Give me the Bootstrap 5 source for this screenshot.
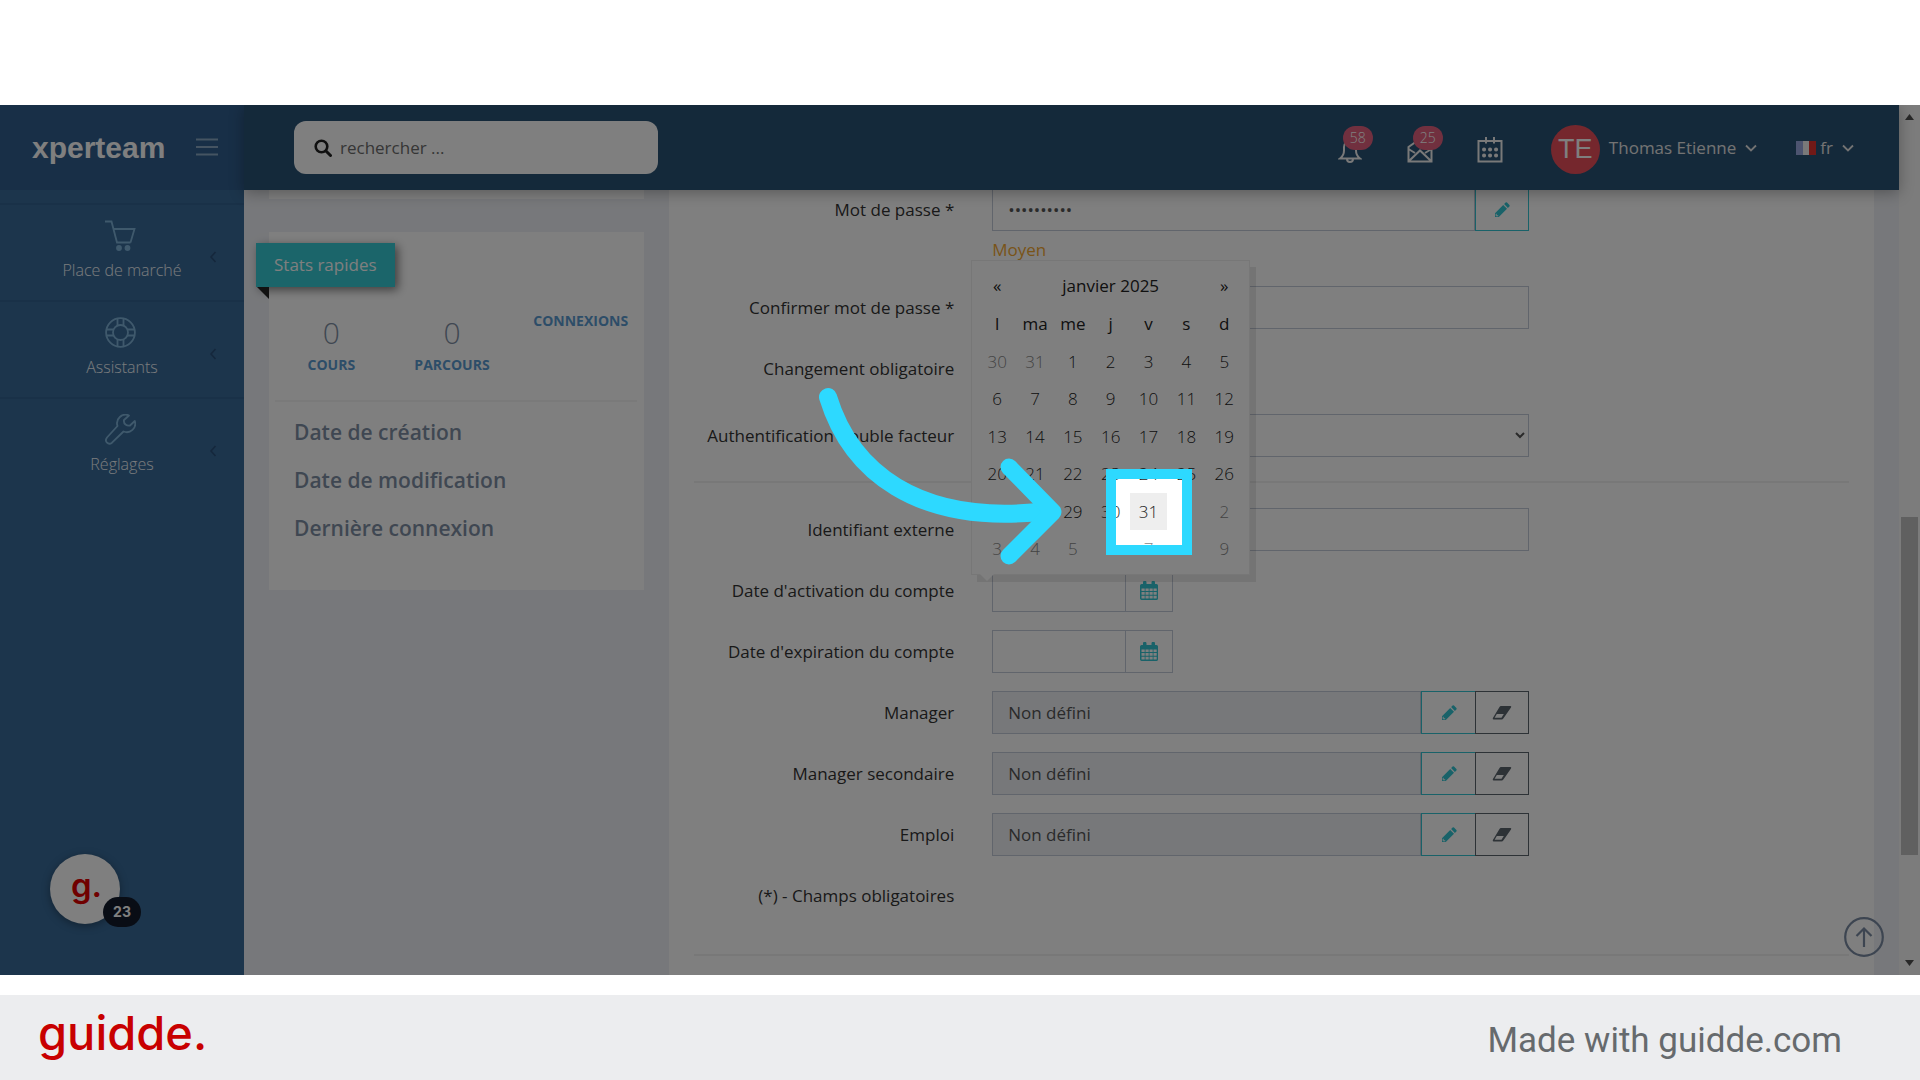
<!DOCTYPE html>
<html lang="fr">
<head>
<meta charset="utf-8">
<meta name="viewport" content="width=device-width, initial-scale=1">
<title>Xperteam – Utilisateur</title>
<link href="https://cdn.jsdelivr.net/npm/bootstrap@5.3.0/dist/css/bootstrap.min.css" rel="stylesheet">
<style>
  body { font-family: "Open Sans", sans-serif; font-size: 17px; color: #333; background: #fff; min-height: 100vh; }
  svg { display: block; flex: none; }
  .stage { margin-top: 105px; background: #eff1f6; }
  .scroll-track { width: 21px; background: #f8f8f8; padding: 9px 2px; }
  .scroll-before { flex: 397 0 0; }
  .scroll-thumb { flex: 339 0 0; background: #c1c1c1; width: 17px; }
  .scroll-after { flex: 105 0 0; }

  .side-nav { width: 244px; background: #386a98; }
  .side-head { height: 85px; background: #305e8e; padding: 0 26px 0 32px; }
  .brand { font-family: "Liberation Sans", sans-serif; font-size: 30px; font-weight: 700; color: #fff; text-decoration: none; line-height: 36px; }
  .side-gap { height: 13px; }
  .side-link { height: 97px; border-top: 2px solid #336290; color: #f2f6fa; font-weight: 300; font-size: 16px; line-height: 22px; text-decoration: none; padding: 15px 20px 0; gap: 8px; }
  .side-link svg { color: #7fb3d9; }
  .side-icon { margin-right: 3px; }
  .side-arrow { right: 27px; top: 46px; }

  .top-nav { height: 85px; background: #285274; box-shadow: 0 3px 14px rgba(0,0,0,.3); padding: 0 45px 0 50px; color: #fff; }
  .search-box { width: 364px; height: 53px; background: #fff; border-radius: 12px; padding: 0 20px; gap: 6px; }
  .search-box input { border: 0; outline: 0; background: transparent; font-size: 17px; color: #666; }
  .search-box input::placeholder { color: #6c6c6c; opacity: 1; }
  .nav-btns { gap: 40px; margin-right: 46px; }
  .nav-btn { border: 0; background: none; padding: 4px 0 0; color: #f2f2f2; width: 30px; height: 34px; display: flex; align-items: center; justify-content: center; position: relative; }
  .count-pill { position: absolute; left: 8px; top: -5px; width: 30px; height: 24px; border-radius: 12px; background: #e3607f; color: #fff; font-size: 14px; line-height: 23px; text-align: center; font-weight: 300; }
  .avatar { width: 49px; height: 49px; border-radius: 50%; background: #ea4f5b; color: #fff; font: 27px/49px "Liberation Sans", sans-serif; text-align: center; margin-top: 4px; }
  .user-menus { gap: 39px; }
  .user-menu { gap: 9px; border: 0; background: none; color: #e6e6e6; padding: 0; }

  .left-col { width: 425px; padding: 0 25px; }
  .tail-panel { height: 9px; background: #fff; }
  .stats-panel { background: #fff; margin-top: 33px; padding: 79px 7px 28px 6px; position: relative; }
  .ribbon { position: absolute; left: -13px; top: 11px; height: 44px; padding: 0 18px; line-height: 43px; background: #36cad4; color: #fff; box-shadow: 3px 3px 9px rgba(0,0,0,.5); }
  .ribbon-fold { position: absolute; left: -12px; top: 55px; border-top: 12px solid #222; border-left: 12px solid transparent; }
  .stat-num { font-size: 30px; line-height: 44px; font-weight: 300; color: #7f8fa4; }
  .stat-cap { font-size: 14px; line-height: 20px; font-weight: 700; color: #5b9bd1; }
  .stats-row { height: 91px; border-bottom: 2px solid #f4f4f4; margin-bottom: 16px; }
  .fact { font-size: 21px; line-height: 28px; font-weight: 600; color: #7f8fa4; padding-left: 19px; margin-bottom: 20px; }

  .form-panel { background: #fff; padding: 0 25px; margin-right: 25px; }
  .f-row { --bs-gutter-x: 38px; margin-bottom: 18px; }
  .f-row label, .f-row .f-label { line-height: 43px; text-align: right; white-space: nowrap; }
  .f-ctl { width: 48.2%; }
  .first-row { margin-top: -2px; }
  .hint { color: #f3a832; line-height: 37px; }
  .tall-row { height: 49px; }
  .box { height: 43px; border: 1px solid #c2cad8; border-radius: 0; font-size: 17px; padding: 0 15px; background-color: #fff; color: #555; }
  .box[readonly] { background-color: #eef1f5; }
  .sq-btn { width: 54px; height: 43px; border: 1px solid #32c5d2; color: #32c5d2; background: #fff; border-radius: 0; padding: 0; display: flex; align-items: center; justify-content: center; flex: none; }
  .sq-dark { border-color: #5a646d; color: #5a646d; }
  .sq-date { border-color: #c2cad8; width: 48px; }
  .date-group { width: 181px; }
  select.box { appearance: auto; padding: 0; width: 100%; }
  .rule { height: 2px; background: #f0f0f0; margin: 24px 0 25px; }
  .last-rule { margin: 31px 0 0; }
  .dp-anchor { position: relative; }

  .dp { position: absolute; left: -21px; bottom: 37px; width: 279px; background: #fff; border: 1px solid #efefef; box-shadow: 6px 7px 0 rgba(102,102,102,.15); z-index: 3; padding: 6px; color: #222; }
  .dp::after { content: ""; position: absolute; left: 8px; bottom: -7px; border-left: 7px solid transparent; border-right: 7px solid transparent; border-top: 7px solid #fff; }
  .dp table { width: 265px; table-layout: fixed; border-collapse: collapse; }
  .dp th, .dp td { text-align: center; padding: 0; font-weight: 400; line-height: 22px; height: 37px; }
  .dp th, .dp tbody tr:nth-child(even) td { height: 38px; }
  .dp td { font-weight: 300; }
  .dp .off { color: #888; }
  .dp .hov { background: #eee; }
  .spot { position: absolute; left: 134px; top: 208px; width: 86px; height: 86px; border: 10px solid #2dd9ff; box-shadow: 0 0 0 3000px rgba(0,0,0,.5); pointer-events: none; z-index: 1; }
  .pointer { position: absolute; left: -162px; top: 120px; pointer-events: none; z-index: 2; }

  .to-top { position: absolute; right: 36px; bottom: 18px; color: #7a8ba3; z-index: 1; }
  .g-bubble { position: absolute; left: 50px; bottom: 51px; width: 70px; height: 70px; border-radius: 50%; background: #fff; box-shadow: 0 2px 8px rgba(0,0,0,.35); color: #e00000; font: 600 33px/60px "Inter", sans-serif; text-align: center; border: 0; padding: 0 0 8px 3px; }
  .g-count { position: absolute; left: 53px; top: 43px; width: 38px; height: 30px; border-radius: 15px; background: #121a2b; color: #fff; font: 700 14px/30px "Inter", sans-serif; }
  .foot { margin-top: 20px; height: 85px; background: #ecedef; padding: 0 78px 0 38px; font-family: "Roboto", sans-serif; font-size: 35px; color: #666a6d; }
  .foot-logo { font-family: "Inter", sans-serif; font-size: 47px; line-height: 60px; font-weight: 500; color: #c80000; text-decoration: none; padding-bottom: 10px; }
  .foot-note { padding-top: 8px; }
</style>
</head>
<body class="d-flex flex-column">

<svg width="0" height="0" class="position-absolute" aria-hidden="true">
  <symbol id="pencil" viewBox="0 0 16 16"><path fill="currentColor" d="M1 11.2 9.2 3l3.8 3.8L4.8 15H1zM10.100 2.100 11.600.6q.7-.6 1.400 0l2.400 2.400q.6.7 0 1.400L13.900 5.900z"/><path d="M2.200 11.800v2h2" stroke="#fff" fill="none"/></symbol>
  <symbol id="eraser" viewBox="0 0 20 16"><path fill="currentColor" d="M9 1h9.500q1.300.3.500 1.600L11.500 13.200q-.9 1.300-1.800 1.300H1.500Q.2 14.200.9 13L7.500 2Q8 1 9 1z"/><path fill="#fff" d="M4.800 9h7L9.500 12.700H2.600z"/></symbol>
  <symbol id="cal" viewBox="0 0 18 19"><path fill="currentColor" d="M1.500 3H3V1.500a1.500 1.500 0 0 1 3.500 0V3h5V1.500a1.500 1.500 0 0 1 3.500 0V3h1.500q1.500.2 1.500 1.500V17.500q-.2 1.500-1.500 1.500h-15Q.2 18.800 0 17.500V4.500Q.2 3.200 1.500 3z"/><path stroke="#fff" stroke-width="2.600" stroke-dasharray="3.200 .8" d="M1.500 8.700h15.200M1.500 12.400h15.200M1.500 16.100h15.200"/></symbol>
  <symbol id="down" viewBox="0 0 12 8"><path d="M1 1.500 6 6.500 11 1.500" fill="none" stroke="currentColor" stroke-width="1.800"/></symbol>
  <symbol id="left" viewBox="0 0 8 12"><path d="M6.500 1 2 6l4.500 5" fill="none" stroke="#2a4f78" stroke-width="1.600"/></symbol>
</svg>

<main class="stage d-flex flex-grow-1 overflow-hidden position-relative">
  <aside class="side-nav position-relative flex-shrink-0">
    <div class="side-head d-flex align-items-center justify-content-between">
      <a href="#" class="brand">xperteam</a>
      <button class="border-0 bg-transparent p-0" aria-label="Menu">
        <svg width="22" height="22" viewBox="0 0 22 22"><path d="M0 2.500h22M0 10h22M0 17.500h22" stroke="#8aa9c4" stroke-width="1.800"/></svg>
      </button>
    </div>
    <nav>
      <div class="side-gap"></div>
      <a href="#" class="side-link d-flex flex-column align-items-center position-relative">
        <svg class="side-icon" width="31" height="31" viewBox="0 0 31 31" fill="none" stroke="currentColor" stroke-width="1.800"><path d="M0 1.500h6.500L12 22.500h13.500M8.500 9h21L25.500 22.500"/><circle cx="14" cy="28" r="2" fill="currentColor"/><circle cx="22.500" cy="28" r="2" fill="currentColor"/></svg>
        Place de marché
        <svg class="side-arrow position-absolute" width="8" height="12"><use href="#left"/></svg>
      </a>
      <a href="#" class="side-link d-flex flex-column align-items-center position-relative">
        <svg class="side-icon" width="31" height="31" viewBox="0 0 31 31" fill="none" stroke="currentColor" stroke-width="1.800"><circle cx="15.500" cy="15.500" r="14.400"/><circle cx="15.500" cy="15.500" r="7.500"/><path d="M12.500 1.500v7M18.500 1.500v7M12.500 22.500v7M18.500 22.500v7M1.500 12.500h7M1.500 18.500h7M22.500 12.500h7M22.500 18.500h7"/></svg>
        Assistants
        <svg class="side-arrow position-absolute" width="8" height="12"><use href="#left"/></svg>
      </a>
      <a href="#" class="side-link d-flex flex-column align-items-center position-relative">
        <svg class="side-icon" width="31" height="31" viewBox="0 0 31 31" fill="none" stroke="currentColor" stroke-width="1.800" stroke-linejoin="round"><path d="M24 1.500A8.500 8.500 0 0 0 12.500 12L2 23.500q-2.200 3 0 5.200t5 0L18.500 17.500A8.500 8.500 0 0 0 29.800 7L25 11.500q-2.500.5-4.500-1T19 6z"/></svg>
        Réglages
        <svg class="side-arrow position-absolute" width="8" height="12"><use href="#left"/></svg>
      </a>
    </nav>
    <button class="g-bubble" aria-label="guidde">g.<span class="g-count">23</span></button>
  </aside>

  <div class="flex-grow-1 d-flex flex-column">
    <header class="top-nav d-flex align-items-center position-relative z-2">
      <div class="search-box d-flex align-items-center me-auto">
        <svg width="18" height="18" viewBox="0 0 18 18"><circle cx="7.500" cy="7.500" r="5.800" fill="none" stroke="#222" stroke-width="2.600"/><path d="m12 12 4.500 4.500" stroke="#222" stroke-width="3" stroke-linecap="round"/></svg>
        <input type="text" class="flex-grow-1" placeholder="rechercher ..." aria-label="rechercher">
      </div>
      <div class="nav-btns d-flex align-items-center">
        <button class="nav-btn" aria-label="Notifications">
          <svg width="24" height="26" viewBox="0 0 24 26" fill="none" stroke="currentColor" stroke-width="2"><path d="M2 21.500h20q-4-3-4-8V10a6 6 0 0 0-12 0v3.500q0 5-4 8zM9 22q0 3 3 3t3-3M12 4V1"/></svg>
          <span class="count-pill">58</span>
        </button>
        <button class="nav-btn" aria-label="Messages">
          <svg width="26" height="26" viewBox="0 0 26 26" fill="none" stroke="currentColor" stroke-width="2"><path d="M1.500 10v14.500h23V10L13 2zM1.500 12l6.500 4M24.500 12 18 16M2 24 13 13.500 24 24"/></svg>
          <span class="count-pill">25</span>
        </button>
        <button class="nav-btn" aria-label="Agenda">
          <svg width="26" height="26" viewBox="0 0 26 26" fill="none" stroke="currentColor" stroke-width="2"><path d="M1.500 4h23v20.500h-23zM9 0v6.500M17 0v6.500"/><path stroke-width="4" stroke-linecap="round" d="M7 12.500h.1M13 12.500h.1M19 12.500h.1M7 18.500h.1M13 18.500h.1M19 18.500h.1"/></svg>
        </button>
      </div>
      <div class="user-menus d-flex align-items-center">
        <button class="user-menu d-flex align-items-center">
          <span class="avatar">TE</span><span>Thomas Etienne</span><svg width="12" height="8"><use href="#down"/></svg>
        </button>
        <button class="user-menu d-flex align-items-center">
          <span class="d-flex align-items-center gap-1"><svg width="20" height="14" viewBox="0 0 20 14"><path fill="#9aa8e0" d="M0 0h7v14H0z"/><path fill="#f2f2f2" d="M7 0h6v14H7z"/><path fill="#e2332f" d="M13 0h7v14h-7z"/></svg>fr</span><svg width="12" height="8"><use href="#down"/></svg>
        </button>
      </div>
    </header>

    <div class="d-flex flex-grow-1">
      <section class="left-col flex-shrink-0">
        <div class="tail-panel"></div>
        <div class="stats-panel">
          <div class="ribbon">Stats rapides</div><div class="ribbon-fold"></div>
          <div class="stats-row row g-0 text-center">
            <div class="col"><div class="stat-num">0</div><div class="stat-cap">COURS</div></div>
            <div class="col ps-2"><div class="stat-num">0</div><div class="stat-cap">PARCOURS</div></div>
            <div class="col ps-3"><div class="stat-cap">CONNEXIONS</div></div>
          </div>
          <div class="fact">Date de création</div>
          <div class="fact">Date de modification</div>
          <div class="fact">Dernière connexion</div>
        </div>
      </section>

      <form class="form-panel flex-grow-1">
        <div class="row f-row first-row">
          <label class="col-3" for="pw">Mot de passe *</label>
          <div class="f-ctl">
            <div class="d-flex"><input id="pw" type="password" class="box flex-grow-1" value="motdepasse"><button type="button" class="sq-btn" aria-label="Modifier"><svg width="16" height="16"><use href="#pencil"/></svg></button></div>
            <div class="hint">Moyen</div>
          </div>
        </div>
        <div class="row f-row">
          <label class="col-3" for="pw2">Confirmer mot de passe *</label>
          <div class="f-ctl"><input id="pw2" type="password" class="box w-100"></div>
        </div>
        <div class="row f-row tall-row"><div class="f-label col-3">Changement obligatoire</div></div>
        <div class="row f-row">
          <label class="col-3" for="mfa">Authentification double facteur</label>
          <div class="f-ctl"><select id="mfa" class="box"><option></option></select></div>
        </div>
        <div class="rule"></div>
        <div class="row f-row">
          <label class="col-3" for="ext">Identifiant externe</label>
          <div class="f-ctl"><input id="ext" type="text" class="box w-100"></div>
        </div>
        <div class="row f-row">
          <label class="col-3" for="act">Date d'activation du compte</label>
          <div class="f-ctl"><div class="dp-anchor d-flex date-group">
            <input id="act" type="text" class="box flex-grow-1 w-50 border-end-0"><button type="button" class="sq-btn sq-date" aria-label="Calendrier"><svg width="18" height="19"><use href="#cal"/></svg></button>
            <div class="dp">
              <table>
                <thead>
                  <tr><th>«</th><th colspan="5">janvier 2025</th><th>»</th></tr>
                  <tr><th>l</th><th>ma</th><th>me</th><th>j</th><th>v</th><th>s</th><th>d</th></tr>
                </thead>
                <tbody>
                  <tr><td class="off">30</td><td class="off">31</td><td>1</td><td>2</td><td>3</td><td>4</td><td>5</td></tr>
                  <tr><td>6</td><td>7</td><td>8</td><td>9</td><td>10</td><td>11</td><td>12</td></tr>
                  <tr><td>13</td><td>14</td><td>15</td><td>16</td><td>17</td><td>18</td><td>19</td></tr>
                  <tr><td>20</td><td>21</td><td>22</td><td>23</td><td>24</td><td>25</td><td>26</td></tr>
                  <tr><td></td><td></td><td>29</td><td>30</td><td class="hov">31</td><td></td><td class="off">2</td></tr>
                  <tr><td class="off">3</td><td class="off">4</td><td class="off">5</td><td class="off">6</td><td class="off">7</td><td class="off">8</td><td class="off">9</td></tr>
                </tbody>
              </table>
              <div class="spot"></div>
              <svg class="pointer" width="260" height="190" viewBox="0 0 260 190" fill="none" stroke="#2dd9ff" stroke-linecap="round" stroke-linejoin="round"><path stroke-width="18" d="M18 16C40 88 105 146 238 130"/><path stroke-width="17" d="M199 86 243 131 199 175"/></svg>
            </div>
          </div></div>
        </div>
        <div class="row f-row">
          <label class="col-3" for="exp">Date d'expiration du compte</label>
          <div class="f-ctl"><div class="d-flex date-group">
            <input id="exp" type="text" class="box flex-grow-1 w-50 border-end-0"><button type="button" class="sq-btn sq-date" aria-label="Calendrier"><svg width="18" height="19"><use href="#cal"/></svg></button>
          </div></div>
        </div>
        <div class="row f-row">
          <label class="col-3" for="mgr">Manager</label>
          <div class="f-ctl"><div class="d-flex"><input id="mgr" class="box flex-grow-1" readonly value="Non défini"><button type="button" class="sq-btn border-end-0" aria-label="Modifier"><svg width="16" height="16"><use href="#pencil"/></svg></button><button type="button" class="sq-btn sq-dark" aria-label="Effacer"><svg width="20" height="16"><use href="#eraser"/></svg></button></div></div>
        </div>
        <div class="row f-row">
          <label class="col-3" for="mgr2">Manager secondaire</label>
          <div class="f-ctl"><div class="d-flex"><input id="mgr2" class="box flex-grow-1" readonly value="Non défini"><button type="button" class="sq-btn border-end-0" aria-label="Modifier"><svg width="16" height="16"><use href="#pencil"/></svg></button><button type="button" class="sq-btn sq-dark" aria-label="Effacer"><svg width="20" height="16"><use href="#eraser"/></svg></button></div></div>
        </div>
        <div class="row f-row">
          <label class="col-3" for="job">Emploi</label>
          <div class="f-ctl"><div class="d-flex"><input id="job" class="box flex-grow-1" readonly value="Non défini"><button type="button" class="sq-btn border-end-0" aria-label="Modifier"><svg width="16" height="16"><use href="#pencil"/></svg></button><button type="button" class="sq-btn sq-dark" aria-label="Effacer"><svg width="20" height="16"><use href="#eraser"/></svg></button></div></div>
        </div>
        <div class="row f-row tall-row mb-0"><div class="f-label col-3">(*) - Champs obligatoires</div></div>
        <div class="rule last-rule"></div>
      </form>
    </div>
  </div>

  <div class="scroll-track d-flex flex-column align-items-center flex-shrink-0">
    <svg width="9" height="6"><path d="M0 6 4.500 0 9 6z" fill="#505050"/></svg>
    <div class="scroll-before"></div>
    <div class="scroll-thumb"></div>
    <div class="scroll-after"></div>
    <svg width="9" height="6"><path d="M0 0 4.500 6 9 0z" fill="#505050"/></svg>
  </div>
  <a href="#" class="to-top" aria-label="Haut de page"><svg width="40" height="40" viewBox="0 0 40 40" fill="none" stroke="currentColor" stroke-width="2.200"><circle cx="20" cy="20" r="18.800"/><path d="M20 30V11M12.500 19 20 11.500 27.500 19"/></svg></a>
</main>

<footer class="foot d-flex justify-content-between align-items-center">
  <a href="#" class="foot-logo">guidde.</a>
  <span class="foot-note">Made with guidde.com</span>
</footer>

<script src="https://cdn.jsdelivr.net/npm/bootstrap@5.3.0/dist/js/bootstrap.bundle.min.js"></script>
</body>
</html>
